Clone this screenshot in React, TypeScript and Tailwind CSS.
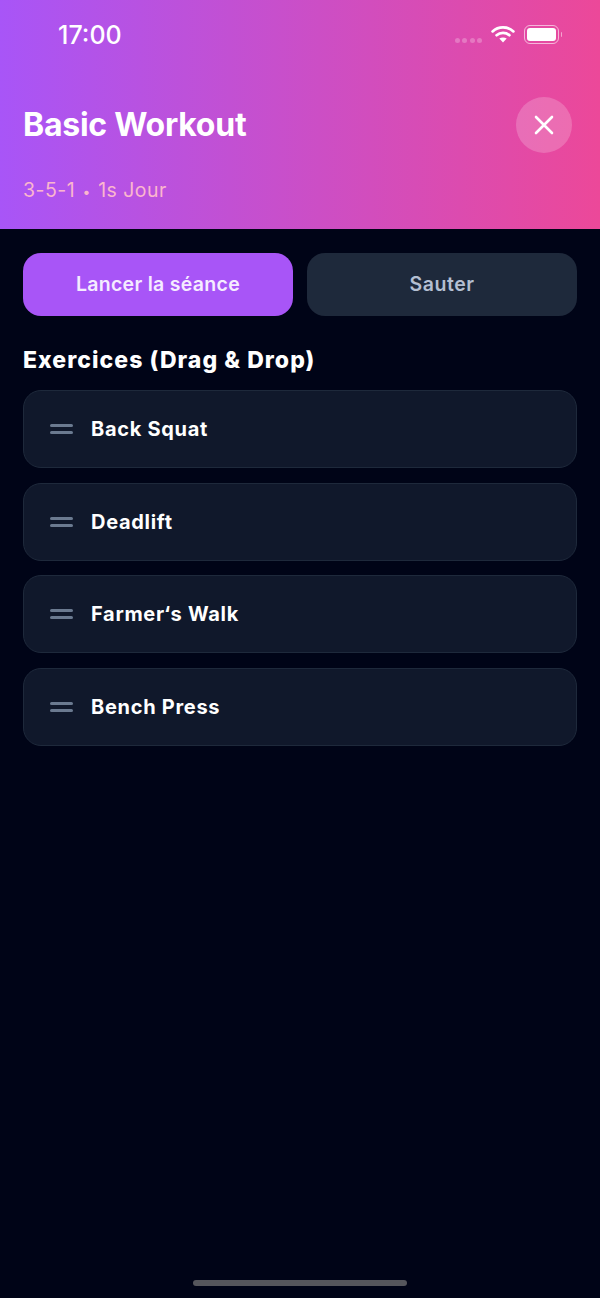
const exercises = ["Back Squat", "Deadlift", "Farmer‘s Walk", "Bench Press"];

function WifiIcon() {
  return (
    <svg width="24" height="18" viewBox="0 0 24 18" fill="none" aria-hidden="true">
      <path d="M1.6 6.4C7.4 1 16.6 1 22.4 6.4" stroke="white" strokeWidth="2.7" strokeLinecap="round" />
      <path d="M5.6 10.2C9.2 7 14.8 7 18.4 10.2" stroke="white" strokeWidth="2.7" strokeLinecap="round" />
      <path d="M12 17.4L8.3 13.6C10.4 12 13.6 12 15.7 13.6L12 17.4Z" fill="white" />
    </svg>
  );
}

function StatusBar() {
  return (
    <div className="flex h-[68px] items-center justify-between pl-[58px] pr-[38px]">
      <span className="pt-[2px] text-[25px] leading-none font-medium text-white">17:00</span>
      <div className="flex items-center">
        <div className="mr-[9px] flex gap-[2.5px] pt-[12px]">
          <span className="h-[5px] w-[5px] rounded-full bg-white/25" />
          <span className="h-[5px] w-[5px] rounded-full bg-white/25" />
          <span className="h-[5px] w-[5px] rounded-full bg-white/25" />
          <span className="h-[5px] w-[5px] rounded-full bg-white/25" />
        </div>
        <WifiIcon />
        <div className="ml-[9px] flex items-center">
          <div className="flex h-[19px] w-[35px] rounded-[6px] border border-white/60 p-[2px]">
            <div className="flex-1 rounded-[3px] bg-white" />
          </div>
          <div className="ml-[2px] h-[5px] w-[1px] rounded-r bg-white/50" />
        </div>
      </div>
    </div>
  );
}

function Header() {
  return (
    <header className="h-[229px] bg-[linear-gradient(to_right,#a855f7,#ec4899)]">
      <StatusBar />
      <div className="flex items-start justify-between pr-[28px] pl-[23px] pt-[29px]">
        <div className="pt-[1px]">
          <h1 className="text-[32px] leading-[54px] font-bold tracking-[-0.25px] text-white">Basic Workout</h1>
          <p className="mt-[25px] text-[19.5px] leading-[26px] tracking-[0.45px] text-[#fbb6ce]">
            3-5-1 <span className="mx-[1.5px] text-[14px]">•</span> 1s Jour
          </p>
        </div>
        <button
          type="button"
          className="flex h-[56px] w-[56px] items-center justify-center rounded-full bg-white/20 text-white"
          aria-label="Fermer"
        >
          <svg width="26" height="26" viewBox="0 0 26 26" fill="none" aria-hidden="true">
            <path d="M5 5L21 21M21 5L5 21" stroke="white" strokeWidth="2.6" strokeLinecap="round" />
          </svg>
        </button>
      </div>
    </header>
  );
}

function ExerciseRow({ name }: { name: string }) {
  return (
    <li className="flex h-[78px] items-center gap-[18px] rounded-[18px] border border-[#1e293b] bg-[#10182b] pl-[26px]">
      <div className="flex w-[23px] flex-col gap-[4px]">
        <span className="h-[3px] rounded-full bg-[#6b7a90]" />
        <span className="h-[3px] rounded-full bg-[#6b7a90]" />
      </div>
      <span className="text-[20px] font-bold tracking-[0.7px] text-white">{name}</span>
    </li>
  );
}

export default function App() {
  return (
    <div
      className="relative flex h-[1298px] w-[600px] flex-col overflow-hidden bg-[#000417]"
      style={{ fontFamily: "Inter, sans-serif" }}
    >
      <Header />
      <main className="px-[23px] pt-[24px]">
        <div className="flex gap-[14px]">
          <button
            type="button"
            className="h-[63px] flex-1 rounded-[18px] bg-[#a855f7] pt-[1px] text-[19.5px] font-semibold tracking-[0.3px] text-[#f5ecff]"
          >
            Lancer la séance
          </button>
          <button
            type="button"
            className="h-[63px] flex-1 rounded-[18px] bg-[#1e293b] pt-[1px] text-[19.5px] font-semibold tracking-[0.55px] text-[#b4bfd2]"
          >
            Sauter
          </button>
        </div>
        <h2 className="mt-[26px] text-[23px] leading-[36px] font-extrabold tracking-[1.05px] text-white">
          Exercices (Drag &amp; Drop)
        </h2>
        <ul className="mt-[12px] flex flex-col gap-[14.5px]">
          {exercises.map((name) => (
            <ExerciseRow key={name} name={name} />
          ))}
        </ul>
      </main>
      {/* iOS home indicator */}
      <div className="absolute bottom-[12px] left-[193px] h-[6px] w-[214px] rounded-full bg-[#55565c]" />
    </div>
  );
}
